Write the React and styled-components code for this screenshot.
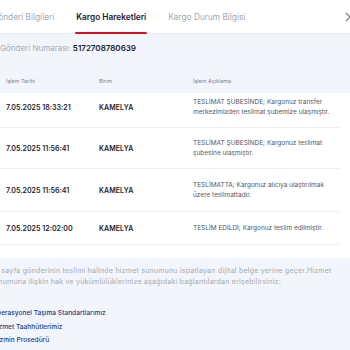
import React from 'react';
import styled, { createGlobalStyle } from 'styled-components';

const GlobalStyle = createGlobalStyle`
  html, body {
    margin: 0;
    padding: 0;
    background: #ffffff;
  }
  body {
    font-family: Inter, 'Open Sans', sans-serif;
    width: 350px;
    height: 350px;
    overflow: hidden;
  }
`;

const Viewport = styled.div`
  width: 350px;
  height: 350px;
  overflow: hidden;
  background: #f2f5fb;
`;

const Modal = styled.div`
  margin-left: -8px;
  width: 366px;
`;

const TabBar = styled.div`
  display: flex;
  align-items: stretch;
  height: 33px;
  background: #ffffff;
  border-bottom: 1px solid #e8ebf1;
  gap: 22px;
`;

const Tab = styled.div`
  position: relative;
  display: flex;
  align-items: center;
  font-size: 8.3px;
  font-weight: ${({ active }) => (active ? 600 : 400)};
  color: ${({ active }) => (active ? '#1c2230' : '#a3a8b3')};
  white-space: nowrap;

  &::after {
    content: '';
    display: ${({ active }) => (active ? 'block' : 'none')};
    position: absolute;
    left: -1px;
    right: -1px;
    bottom: -1px;
    height: 2px;
    border-radius: 1px;
    background: #d1121c;
  }
`;

const CloseButton = styled.div`
  margin-left: auto;
  margin-right: 3px;
  display: flex;
  align-items: center;
  color: #6b7280;
`;

const Body = styled.div`
  padding: 8px 8px 0 8px;
`;

const NumberLine = styled.div`
  font-size: 8px;
  color: #a7acb6;
  padding: 1px 0 0;
  height: 20px;

  strong {
    color: #1c2230;
    font-weight: 600;
  }
`;

const Table = styled.div`
  margin-left: -8px;
  margin-right: -8px;
  margin-top: 5px;
`;

const Grid = styled.div`
  display: grid;
  grid-template-columns: 93px 94px 1fr;
  align-items: center;
  padding-left: 14px;
`;

const HeaderRow = styled(Grid)`
  height: 25px;
  font-size: 5.4px;
  color: #7d8390;
`;

const Rows = styled.div`
  background: #ffffff;
  padding-bottom: 13px;
`;

const Row = styled(Grid)`
  height: ${({ h }) => h}px;
  padding-bottom: ${({ lift }) => lift || 0}px;
  box-sizing: border-box;
  border-bottom: 1px solid #eef0f4;
  margin-right: 18px;
`;

const DateCell = styled.div`
  font-size: 7.1px;
  font-weight: 600;
  color: #1c2230;
`;

const UnitCell = styled.div`
  font-size: 7px;
  font-weight: 600;
  color: #1c2230;
  letter-spacing: 0.1px;
`;

const DescCell = styled.div`
  font-size: 6.5px;
  line-height: 10.5px;
  color: #535866;
`;

const DescLine = styled.div`
  white-space: nowrap;
`;

const Footer = styled.div`
  padding: 7px 8px 0 0;
`;

const Note = styled.p`
  margin: 0 0 0 -2px;
  font-size: 7px;
  letter-spacing: 0.23px;
  line-height: 11px;
  color: #a5aab4;
  white-space: nowrap;
`;

const Links = styled.ul`
  list-style: none;
  margin: 23px 0 0;
  padding: 0;
  display: flex;
  flex-direction: column;
  gap: 6px;
`;

const LinkItem = styled.li`
  font-size: 6.6px;
  line-height: 7.5px;
  color: #2c3c85;
  font-weight: 500;
`;

const rows = [
  {
    date: '7.05.2025 18:33:21',
    desc: ['TESLİMAT ŞUBESİNDE; Kargonuz transfer', 'merkezimizden teslimat şubemize ulaşmıştır.'],
    h: 35,
    lift: 6,
  },
  {
    date: '7.05.2025 11:56:41',
    desc: ['TESLİMAT ŞUBESİNDE; Kargonuz teslimat', 'şubesine ulaşmıştır.'],
    h: 41,
  },
  {
    date: '7.05.2025 11:56:41',
    desc: ['TESLİMATTA; Kargonuz alıcıya ulaştırılmak', 'üzere teslimattadır.'],
    h: 43,
  },
  {
    date: '7.05.2025 12:02:00',
    desc: ['TESLİM EDİLDİ; Kargonuz teslim edilmiştir.'],
    h: 33,
  },
];

export default function App() {
  return (
    <>
      <GlobalStyle />
      <Viewport>
        <Modal>
          <TabBar>
            <Tab>Gönderi Bilgileri</Tab>
            <Tab active>Kargo Hareketleri</Tab>
            <Tab>Kargo Durum Bilgisi</Tab>
            <CloseButton>
              <svg width="10" height="10" viewBox="0 0 10 10">
                <path d="M1 1 L9 9 M9 1 L1 9" stroke="currentColor" strokeWidth="1.1" />
              </svg>
            </CloseButton>
          </TabBar>
          <Body>
            <NumberLine>
              Gönderi Numarası: <strong>5172708780639</strong>
            </NumberLine>
            <Table>
              <HeaderRow>
                <div>İşlem Tarihi</div>
                <div>Birim</div>
                <div>İşlem Açıklama</div>
              </HeaderRow>
              <Rows>
                {rows.map((r, i) => (
                  <Row key={i} h={r.h} lift={r.lift}>
                    <DateCell>{r.date}</DateCell>
                    <UnitCell>KAMELYA</UnitCell>
                    <DescCell>
                      {r.desc.map((line) => (
                        <DescLine key={line}>{line}</DescLine>
                      ))}
                    </DescCell>
                  </Row>
                ))}
              </Rows>
            </Table>
          </Body>
          <Footer>
            <Note>
              Bu sayfa gönderinin teslimi halinde hizmet sunumunu ispatlayan dijital belge yerine geçer.Hizmet
              <br />
              sunumuna ilişkin hak ve yükümlülüklerinize aşağıdaki bağlantılardan erişebilirsiniz:
            </Note>
            <Links>
              <LinkItem>Operasyonel Taşıma Standartlarımız</LinkItem>
              <LinkItem>Hizmet Taahhütlerimiz</LinkItem>
              <LinkItem>Tazmin Prosedürü</LinkItem>
            </Links>
          </Footer>
        </Modal>
      </Viewport>
    </>
  );
}
